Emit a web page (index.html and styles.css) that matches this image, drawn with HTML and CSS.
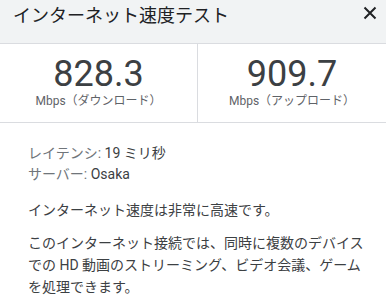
FILE: index.html
```html
<!DOCTYPE html>
<html lang="ja">
<head>
  <meta charset="UTF-8" />
  <title>インターネット速度テスト</title>
  <link rel="stylesheet" href="styles.css">
</head>
<body>

<div class="panel">
  <!-- タイトル -->
  <header class="panel-head">
    <div class="panel-title">インターネット速度テスト</div>
    <button class="close-btn" aria-label="閉じる">
      <svg width="14" height="14" viewBox="0 0 14 14">
        <path d="M1.5 1.5 L12.5 12.5 M12.5 1.5 L1.5 12.5" stroke="#202124" stroke-width="2" fill="none" />
      </svg>
    </button>
  </header>

  <!-- 結果 -->
  <div class="stats">
    <div class="stat">
      <div class="stat-value">828.3</div>
      <div class="stat-unit">Mbps（ダウンロード）</div>
    </div>
    <div class="stat">
      <div class="stat-value">909.7</div>
      <div class="stat-unit">Mbps（アップロード）</div>
    </div>
  </div>

  <div class="details">
    <div class="meta">
      <div><span class="meta-label">レイテンシ:</span> 19 ミリ秒</div>
      <div><span class="meta-label">サーバー:</span> Osaka</div>
    </div>
    <p>インターネット速度は非常に高速です。</p>
    <p>このインターネット接続では、同時に複数のデバイスでの HD 動画のストリーミング、ビデオ会議、ゲームを処理できます。</p>
  </div>
</div>

</body>
</html>
```

FILE: styles.css
```css
body {
  margin: 0;
  padding: 0;
  background-color: #fff;
  font-family: Roboto, 'Noto Sans CJK JP', sans-serif;
  color: #202124;
}

.panel {
  width: 386px;
}

.panel-head {
  background-color: #f1f3f4;
  border-bottom: 1px solid #dadce0;
  height: 43px;
  display: flex;
  align-items: flex-start;
  justify-content: space-between;
  padding: 0 9px 0 13px;
}

.panel-title {
  font-size: 18px;
  line-height: 24px;
  padding-top: 4px;
  color: #202124;
}

.close-btn {
  background: none;
  border: none;
  padding: 0;
  width: 14px;
  height: 14px;
  margin-top: 6px;
  cursor: pointer;
}

.close-btn svg {
  display: block;
}

.stats {
  display: flex;
  border-bottom: 1px solid #dadce0;
}

.stat {
  flex: 0 0 197px;
  text-align: center;
  padding: 11px 0 13px;
}

.stat + .stat {
  flex: 1;
  border-left: 1px solid #dadce0;
}

.stat-value {
  font-size: 36px;
  line-height: 38px;
  color: #3c4043;
}

.stat-unit {
  font-size: 12px;
  line-height: 16px;
  color: #5f6368;
}

.details {
  padding: 20px 20px 0 28px;
  font-size: 14px;
  line-height: 22px;
  color: #3c4043;
}

.meta {
  line-height: 21px;
  margin-bottom: 14px;
}

.meta-label {
  color: #70757a;
}

.details p {
  margin: 0 0 11px;
}
```
